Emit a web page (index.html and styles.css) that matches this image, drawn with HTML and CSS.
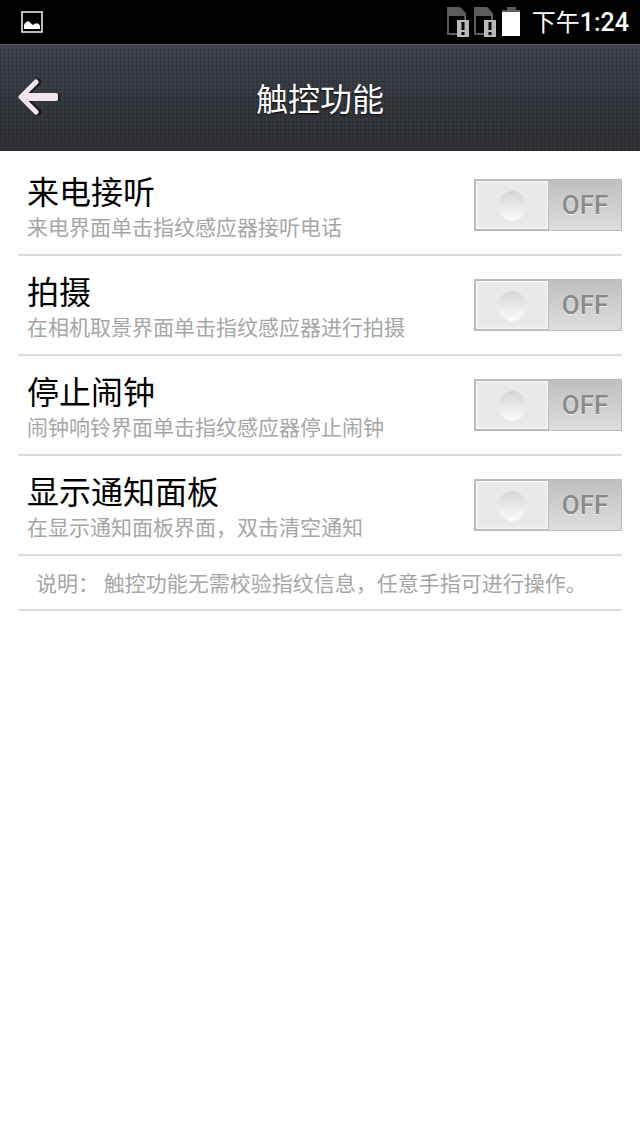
FILE: index.html
```html
<!DOCTYPE html>
<html lang="zh-CN">
<head>
<meta charset="utf-8">
<meta name="viewport" content="width=device-width, initial-scale=1">
<title>触控功能</title>
<link rel="stylesheet" href="styles.css">
</head>
<body>
<div class="status">
  <svg class="status-picture" viewBox="0 0 22 22" width="22" height="22" aria-hidden="true">
    <rect x="1" y="1" width="20" height="20" fill="none" stroke="#e8e8e8" stroke-width="1.6"/>
    <path d="M3 18v-4l1-2 2-1.500h2l2 2 2 1.500 2-1.500h3l2 2v3.500z" fill="#fff"/>
  </svg>
  <div class="status-right">
    <svg viewBox="0 0 22 30" width="22" height="30" aria-hidden="true">
      <path fill-rule="evenodd" d="M0 0h13l6 6v22H0zM2 9v17h15V9z" fill="#5c5c5c"/>
      <rect x="10" y="13" width="12" height="17" fill="#b8b8b8"/>
      <path d="M14.500 15h3v8h-3zM14.500 25h3v3h-3z" fill="#000"/>
    </svg>
    <svg viewBox="0 0 22 30" width="22" height="30" aria-hidden="true">
      <path fill-rule="evenodd" d="M0 0h13l6 6v22H0zM2 9v17h15V9z" fill="#5c5c5c"/>
      <rect x="10" y="13" width="12" height="17" fill="#b8b8b8"/>
      <path d="M14.500 15h3v8h-3zM14.500 25h3v3h-3z" fill="#000"/>
    </svg>
    <svg viewBox="0 0 20 30" width="20" height="30" aria-hidden="true">
      <path d="M6 0h9v3h4v3H1V3h5z" fill="#5c5c5c"/>
      <path d="M1 5h18v24H1z" fill="#fff"/>
    </svg>
    <span class="clock">下午<b>1:24</b></span>
  </div>
</div>
<header class="bar">
  <button class="back" type="button" aria-label="返回">
    <svg viewBox="0 0 42 38" width="42" height="38" aria-hidden="true">
      <path d="M20 4L4 19l16 15M5 19h34" fill="none" stroke="#1c1d21" stroke-width="7" stroke-linecap="round" stroke-linejoin="round"/>
      <path d="M18 4L3 19l15 15" fill="none" stroke="#efe6ec" stroke-width="5" stroke-linecap="round" stroke-linejoin="round"/>
      <path d="M5 15h33q2 0 2 2v4q0 2-2 2H5L1 19z" fill="#efe6ec"/>
    </svg>
  </button>
  <h1 class="title">触控功能</h1>
</header>
<main class="list">
  <label class="row">
    <span class="texts"><span class="name">来电接听</span><span class="hint">来电界面单击指纹感应器接听电话</span></span>
    <span class="switch"><input type="checkbox" class="box"><span class="thumb"></span><span class="state">OFF</span></span>
  </label>
  <label class="row">
    <span class="texts"><span class="name">拍摄</span><span class="hint">在相机取景界面单击指纹感应器进行拍摄</span></span>
    <span class="switch"><input type="checkbox" class="box"><span class="thumb"></span><span class="state">OFF</span></span>
  </label>
  <label class="row">
    <span class="texts"><span class="name">停止闹钟</span><span class="hint">闹钟响铃界面单击指纹感应器停止闹钟</span></span>
    <span class="switch"><input type="checkbox" class="box"><span class="thumb"></span><span class="state">OFF</span></span>
  </label>
  <label class="row">
    <span class="texts"><span class="name">显示通知面板</span><span class="hint">在显示通知面板界面，双击清空通知</span></span>
    <span class="switch"><input type="checkbox" class="box"><span class="thumb"></span><span class="state">OFF</span></span>
  </label>
  <p class="note">说明： 触控功能无需校验指纹信息，任意手指可进行操作。</p>
</main>
</body>
</html>
```
FILE: styles.css
```css
* { box-sizing: border-box; }

body {
  margin: 0;
  background: #fff;
  color: #000;
  font-family: "Noto Sans CJK SC", sans-serif;
}

.status {
  display: flex;
  justify-content: space-between;
  align-items: center;
  height: 44px;
  padding: 0 11px 0 21px;
  background: #000;
}

.status svg { display: block; }

.status-right {
  display: flex;
  align-items: center;
  gap: 5px;
}

.clock {
  margin-left: 6px;
  color: #fff;
  font-size: 24px;
  line-height: 30px;
  white-space: nowrap;
}

.clock b {
  font-family: Roboto, sans-serif;
  font-size: 25px;
  font-weight: 500;
}

.bar {
  display: grid;
  grid-template-columns: 60px 1fr 60px;
  align-items: center;
  height: 107px;
  padding-bottom: 2px;
  border-top: 1px solid #5a5b60;
  background:
    repeating-linear-gradient(90deg, rgba(0, 0, 0, 0.12) 0 1px, transparent 1px 4px),
    repeating-linear-gradient(rgba(0, 0, 0, 0.12) 0 1px, transparent 1px 4px),
    linear-gradient(#3f434d, #2f3136);
}

.back {
  display: flex;
  justify-content: flex-end;
  padding: 0;
  border: 0;
  background: none;
}

.title {
  margin: 0;
  color: #fff;
  font-size: 32px;
  font-weight: 400;
  line-height: 44px;
  text-align: center;
  text-shadow: 0 1px 2px #000;
}

.list { padding: 5px 18px; }

.row {
  display: flex;
  justify-content: space-between;
  align-items: center;
  height: 100px;
  padding-left: 9px;
  border-bottom: 2px solid #dcdcdc;
}

.texts {
  display: flex;
  flex-direction: column;
  padding-top: 2px;
}

.name {
  font-size: 32px;
  line-height: 40px;
}

.hint {
  color: #a6a6a6;
  font-size: 21px;
  line-height: 32px;
}

.switch {
  position: relative;
  display: flex;
  flex: none;
  width: 148px;
  height: 52px;
  border: 1px solid #bcbcbc;
  background: linear-gradient(#bfbfbf, #dedede);
}

.box {
  position: absolute;
  inset: 0;
  width: 100%;
  height: 100%;
  margin: 0;
  opacity: 0;
}

.thumb {
  display: flex;
  align-items: center;
  justify-content: center;
  width: 74px;
  padding-top: 2px;
  border: 1px solid #bcbcbc;
  background: #e9e9e9;
  box-shadow: inset 0 0 2px 1px #fafafa;
}

.thumb::before {
  content: "";
  width: 28px;
  height: 30px;
  border-radius: 50%;
  background: linear-gradient(#d6d6d6, #fbfbfb);
}

.state {
  flex: 1;
  color: #8a8a8a;
  font-family: Roboto, sans-serif;
  font-size: 26px;
  font-weight: 500;
  line-height: 50px;
  text-align: center;
  text-shadow: 0 1px 1px #f0f0f0;
}

.note {
  height: 55px;
  margin: 0;
  padding-left: 18px;
  border-bottom: 2px solid #dcdcdc;
  color: #a6a6a6;
  font-size: 21px;
  line-height: 52px;
}
```
